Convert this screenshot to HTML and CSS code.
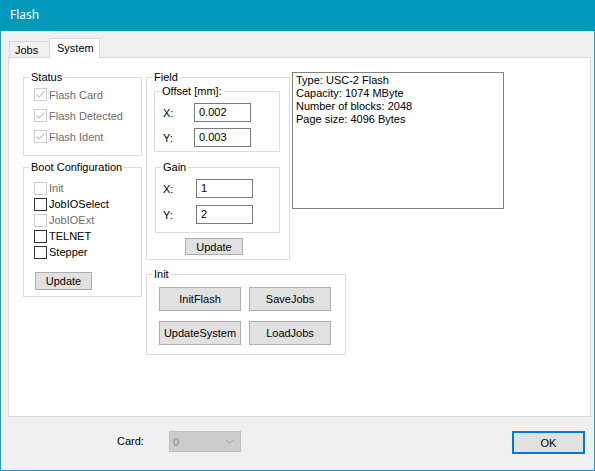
FILE: index.html
```html
<!DOCTYPE html>
<html lang="en">
<head>
    <meta charset="UTF-8">
    <title>Flash</title>
    <link rel="stylesheet" href="styles.css">
</head>
<body>
    <div class="window">
        <div class="titlebar">Flash</div>
        <div class="client">
            <div class="tabs">
                <div class="tab">Jobs</div>
                <div class="tab active">System</div>
            </div>

            <div class="panel">
                <div class="col-left">
                    <fieldset class="group status">
                        <legend>Status</legend>
                        <div class="check disabled checked"><span class="box"><svg viewBox="0 0 11 11"><polyline points="1.5,5.5 4,8 9.5,2.5"/></svg></span>Flash Card</div>
                        <div class="check disabled checked"><span class="box"><svg viewBox="0 0 11 11"><polyline points="1.5,5.5 4,8 9.5,2.5"/></svg></span>Flash Detected</div>
                        <div class="check disabled checked"><span class="box"><svg viewBox="0 0 11 11"><polyline points="1.5,5.5 4,8 9.5,2.5"/></svg></span>Flash Ident</div>
                    </fieldset>

                    <fieldset class="group boot">
                        <legend>Boot Configuration</legend>
                        <div class="check disabled"><span class="box"></span>Init</div>
                        <div class="check"><span class="box"></span>JobIOSelect</div>
                        <div class="check disabled"><span class="box"></span>JobIOExt</div>
                        <div class="check"><span class="box"></span>TELNET</div>
                        <div class="check"><span class="box"></span>Stepper</div>
                        <button class="btn boot-update">Update</button>
                    </fieldset>
                </div>

                <div class="col-mid">
                    <div class="top-row">
                        <fieldset class="group field">
                            <legend>Field</legend>
                            <fieldset class="group offset">
                                <legend>Offset [mm]:</legend>
                                <div class="row"><span class="lbl">X:</span><span class="edit">0.002</span></div>
                                <div class="row"><span class="lbl">Y:</span><span class="edit">0.003</span></div>
                            </fieldset>
                            <fieldset class="group gain">
                                <legend>Gain</legend>
                                <div class="row"><span class="lbl">X:</span><span class="edit">1</span></div>
                                <div class="row"><span class="lbl">Y:</span><span class="edit">2</span></div>
                            </fieldset>
                            <button class="btn field-update">Update</button>
                        </fieldset>

                        <div class="info">
                            Type: USC-2 Flash<br>
                            Capacity: 1074 MByte<br>
                            Number of blocks: 2048<br>
                            Page size: 4096 Bytes
                        </div>
                    </div>

                    <fieldset class="group init">
                        <legend>Init</legend>
                        <div class="init-buttons">
                            <button class="btn">InitFlash</button>
                            <button class="btn">SaveJobs</button>
                            <button class="btn">UpdateSystem</button>
                            <button class="btn">LoadJobs</button>
                        </div>
                    </fieldset>
                </div>
            </div>

            <div class="footer">
                <span class="card-label">Card:</span>
                <div class="combo">
                    <span>0</span>
                    <svg viewBox="0 0 9 5"><polyline points="0.5,0.5 4.5,4.5 8.5,0.5"/></svg>
                </div>
                <button class="btn ok">OK</button>
            </div>
        </div>
    </div>
</body>
</html>
```

FILE: styles.css
```css
body {
    margin: 0;
    padding: 0;
    font-family: 'Liberation Sans', Arial, sans-serif;
    font-size: 11px;
    color: #000;
}

.window {
    width: 595px;
    height: 471px;
    box-sizing: border-box;
    border: 1px solid #1a9fc1;
    border-top: none;
    display: flex;
    flex-direction: column;
}

.titlebar {
    height: 31px;
    margin: 0 -1px;
    padding-left: 10px;
    background: #0399bc;
    color: #ffffff;
    font-family: 'Noto Sans', sans-serif;
    font-size: 12px;
    line-height: 30px;
}

.client {
    flex: 1;
    background: #f0f0f0;
    padding: 7px 3px 0 7px;
}

/* tabs */
.tabs {
    display: flex;
    align-items: flex-end;
    height: 19px;
    padding-left: 1px;
}

.tab {
    box-sizing: border-box;
    height: 16px;
    width: 40px;
    padding-left: 5px;
    border: 1px solid #d9d9d9;
    border-right: none;
    border-bottom: none;
    background: #f0f0f0;
    line-height: 16px;
}

.tab.active {
    position: relative;
    z-index: 1;
    width: 51px;
    height: 20px;
    margin-bottom: -1px;
    padding-left: 7px;
    border-right: 1px solid #d9d9d9;
    background: #ffffff;
    line-height: 18px;
}

.panel {
    box-sizing: border-box;
    height: 360px;
    background: #ffffff;
    border: 1px solid #d9d9d9;
    display: flex;
    align-items: flex-start;
    padding: 13px 0 0 14px;
}

/* group boxes: the legend always sits 5px in from the border */
.group {
    --pl: 0px;
    margin: 0;
    padding: 0 0 0 var(--pl);
    min-width: 0;
    border: 1px solid #dcdcdc;
    box-sizing: border-box;
}

.group legend {
    margin-left: calc(5px - var(--pl));
    padding: 0 2px;
    line-height: 13px;
    height: 13px;
}

.col-left {
    width: 119px;
    display: flex;
    flex-direction: column;
}

.status {
    --pl: 10px;
    padding-bottom: 8px;
}

.boot {
    --pl: 10px;
    margin-top: 5px;
    padding-top: 6px;
    padding-bottom: 6px;
}

.check {
    display: flex;
    align-items: center;
    height: 21px;
}

.boot .check {
    height: 16px;
}

.check .box {
    box-sizing: border-box;
    width: 13px;
    height: 13px;
    margin-right: 2px;
    border: 1px solid #333333;
    background: #ffffff;
    display: flex;
    align-items: center;
    justify-content: center;
}

.check.disabled {
    color: #6d6d6d;
}

.check.disabled .box {
    border-color: #cccccc;
}

.check .box svg {
    width: 11px;
    height: 11px;
    fill: none;
    stroke: #c4c4c4;
    stroke-width: 1.2;
}

/* buttons */
.btn {
    box-sizing: border-box;
    margin: 0;
    padding: 0;
    background: #e1e1e1;
    border: 1px solid #adadad;
    font-family: inherit;
    font-size: 11px;
    font-weight: normal;
    color: #000;
}

.boot-update {
    width: 57px;
    height: 18px;
    margin: 12px 0 0 1px;
}

/* middle column */
.col-mid {
    margin-left: 4px;
    display: flex;
    flex-direction: column;
}

.top-row {
    display: flex;
    align-items: flex-start;
}

.field {
    --pl: 7px;
    width: 144px;
    height: 189px;
}

.offset {
    --pl: 8px;
    width: 126px;
    margin-top: 1px;
    padding-top: 5px;
    padding-bottom: 4px;
}

.gain {
    --pl: 7px;
    width: 125px;
    margin: 9px 0 0 1px;
    padding-top: 5px;
    padding-bottom: 8px;
}

.row {
    display: flex;
    align-items: center;
    height: 19px;
}

.offset .row + .row {
    margin-top: 6px;
}

.gain .row + .row {
    margin-top: 7px;
}

.lbl {
    width: 31px;
}

.gain .lbl {
    width: 33px;
}

.edit {
    box-sizing: border-box;
    width: 57px;
    height: 19px;
    padding-left: 4px;
    border: 1px solid #7a7a7a;
    background: #ffffff;
    line-height: 17px;
}

.field-update {
    width: 58px;
    height: 17px;
    margin: 5px 0 0 31px;
}

.info {
    box-sizing: border-box;
    width: 212px;
    height: 137px;
    margin: 1px 0 0 2px;
    padding: 1px 0 0 3px;
    border: 1px solid #828282;
    line-height: 13px;
}

.init {
    --pl: 12px;
    width: 200px;
    margin-top: 8px;
    padding-top: 6px;
    padding-bottom: 9px;
}

.init-buttons {
    display: grid;
    grid-template-columns: 82px 82px;
    grid-auto-rows: 24px;
    column-gap: 8px;
    row-gap: 10px;
}

/* footer */
.footer {
    display: flex;
    align-items: flex-start;
    padding: 14px 6px 0 109px;
}

.card-label {
    width: 52px;
    line-height: 21px;
}

.combo {
    box-sizing: border-box;
    width: 72px;
    height: 21px;
    padding: 0 6px 0 3px;
    background: #cccccc;
    border: 1px solid #bfbfbf;
    color: #838383;
    display: flex;
    align-items: center;
    justify-content: space-between;
}

.combo svg {
    width: 9px;
    height: 5px;
    fill: none;
    stroke: #a6a6a6;
    stroke-width: 1;
}

.ok {
    width: 73px;
    height: 23px;
    margin-left: auto;
    border: 2px solid #0078d7;
}
```
